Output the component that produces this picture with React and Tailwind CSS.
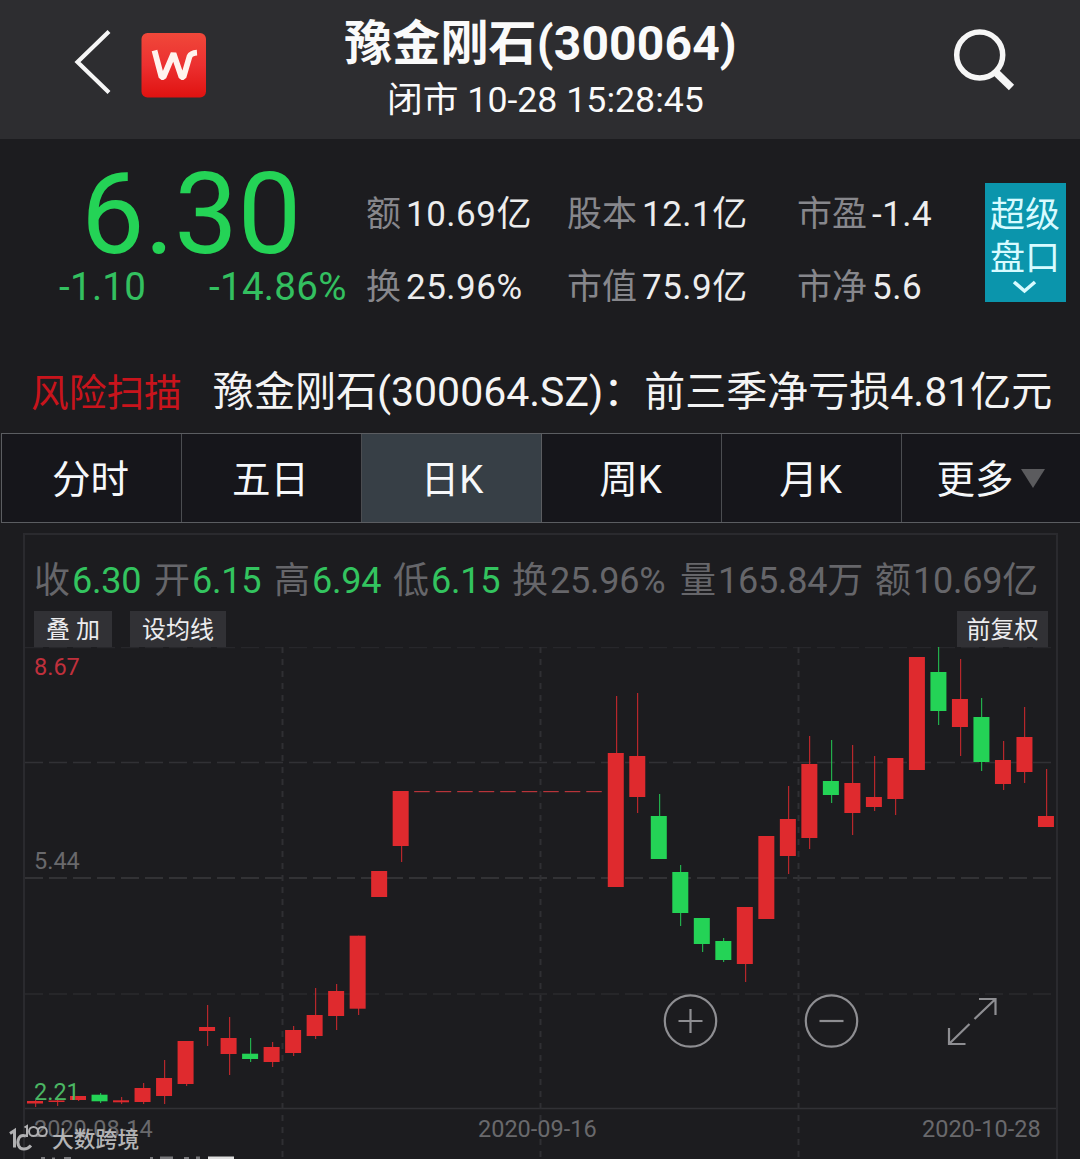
import React from "react";

const RED = "#df2a2e";
const GREEN = "#24d356";

// [index, body top, body bottom, high, low, rising]
const CANDLES = [
  [0, 1101, 1103.5, 1100, 1107, true],
  [1, 1100.5, 1102, 1099, 1106, true],
  [2, 1096, 1100, 1096, 1101, true],
  [3, 1094.7, 1101.3, 1093, 1103, false],
  [4, 1100.3, 1102.3, 1097, 1104, true],
  [5, 1088, 1102, 1083, 1104, true],
  [6, 1078, 1096, 1060, 1104, true],
  [7, 1041, 1084, 1041, 1086, true],
  [8, 1027, 1031, 1005, 1046, true],
  [9, 1038, 1054, 1017, 1075, true],
  [10, 1053.7, 1059, 1038, 1062, false],
  [11, 1047, 1062, 1042, 1067, true],
  [12, 1030, 1053, 1026, 1056, true],
  [13, 1015, 1036, 988, 1039, true],
  [14, 991, 1016, 984, 1030, true],
  [15, 935.7, 1008.7, 935.7, 1015, true],
  [16, 871, 897, 871, 897, true],
  [17, 791, 846, 791, 862, true],
  [27, 753, 887, 696, 887, true],
  [28, 756, 797, 693, 813, true],
  [29, 816, 859, 794, 859, false],
  [30, 872, 913, 865, 926, false],
  [31, 918, 944, 918, 952, false],
  [32, 941, 960, 938, 962, false],
  [33, 907, 964, 907, 982, true],
  [34, 836, 919, 836, 919, true],
  [35, 819, 856, 786, 874, true],
  [36, 764, 838, 736, 849, true],
  [37, 781, 795, 740, 803, false],
  [38, 783, 813, 745, 835, true],
  [39, 797, 807, 756, 811, true],
  [40, 758, 799, 758, 815, true],
  [41, 657, 770, 657, 770, true],
  [42, 672, 711, 646, 725, false],
  [43, 699, 727, 659, 756, true],
  [44, 717, 762, 698, 771, false],
  [45, 760, 784, 741, 790, true],
  [46, 737, 772, 707, 783, true],
  [47, 816, 827, 769, 827, true],
];

const SUSPENDED = [18, 19, 20, 21, 22, 23, 24, 25, 26];
const candleX = (i) => 35 + 21.51 * i;

function Header() {
  return (
    <header className="grid h-[139px] grid-cols-[335px_411px_334px] bg-[#2d2d30] text-[#fafafa]">
      <div className="flex items-start pl-[72px] pt-[28px]">
        <svg width="42" height="68" viewBox="72 28 42 68" fill="none" stroke="#f6f6f6" strokeWidth="4.2">
          <path d="M109 31.5 77.5 62 109 92.500" />
        </svg>
        <svg className="ml-[27px] mt-[5px]" width="66" height="66" viewBox="141 33 66 66" fill="none">
          <defs>
            <linearGradient id="brand" x1="0" y1="0" x2="0" y2="1">
              <stop offset="0" stopColor="#f0483a" />
              <stop offset="0.5" stopColor="#ec3030" />
              <stop offset="1" stopColor="#e01210" />
            </linearGradient>
          </defs>
          <rect x="141.500" y="33" width="64.500" height="64.500" rx="6" fill="url(#brand)" />
          <path
            d="M154.500 50.500 161.500 77H163.500L173.500 53.500 181.500 77H183.500L189.500 56.500Q191 53 197 52.600"
            stroke="#fff3ee"
            strokeWidth="5.800"
            strokeLinejoin="bevel"
          />
        </svg>
      </div>
      <div className="flex flex-col items-center whitespace-nowrap pt-[18px]">
        <h1 className="text-[48px] font-bold leading-[51px] tracking-[0.150px]">豫金刚石(300064)</h1>
        <p className="mt-[11px] pl-[10px] text-[35.700px] leading-[40px]">闭市 10-28 15:28:45</p>
      </div>
      <div className="flex items-start justify-end pr-[64px] pt-[26px]">
        <svg width="64" height="68" viewBox="952 26 64 68" fill="none" stroke="#f6f6f6">
          <circle cx="979.700" cy="55" r="23" strokeWidth="5.500" />
          <path d="M995.500 72 1011.500 87.500" strokeWidth="7.500" />
        </svg>
      </div>
    </header>
  );
}

function Stat({ label, value, labelClass }) {
  return (
    <div className="flex whitespace-nowrap text-[35px] leading-[40px]">
      <span className={`${labelClass} shrink-0 text-[#87878c]`}>{label}</span>
      <span className="tracking-[0.500px] text-[#ededed]">{value}</span>
    </div>
  );
}

function Quote() {
  return (
    <section className="flex h-[227px]">
      <div className="w-[366px] shrink-0 pt-[22px]">
        <div className="pl-[81px] text-[113px] leading-[108px] text-[#24d356]">6.30</div>
        <div className="flex text-[38.500px] leading-[36px] tracking-[0.300px] text-[#33c060]">
          <span className="w-[150px] pl-[59px]">-1.10</span>
          <span className="pl-[59px]">-14.86%</span>
        </div>
      </div>
      <div className="grid w-[619px] shrink-0 auto-rows-[40px] grid-cols-[201px_230px_188px] gap-y-[33px] pt-[56px]">
        <Stat label="额" value="10.69亿" labelClass="w-[40px]" />
        <Stat label="股本" value="12.1亿" labelClass="w-[75px]" />
        <Stat label="市盈" value="-1.4" labelClass="w-[75px]" />
        <Stat label="换" value="25.96%" labelClass="w-[40px]" />
        <Stat label="市值" value="75.9亿" labelClass="w-[75px]" />
        <Stat label="市净" value="5.6" labelClass="w-[75px]" />
      </div>
      <button className="mt-[44px] flex h-[119px] w-[81px] flex-col items-center bg-[#0b95ac] pr-px pt-[11px] text-[35px] leading-[43px] text-[#d8fbff]">
        <span>超级</span>
        <span>盘口</span>
        <svg width="26" height="16" viewBox="0 0 26 16" fill="none" stroke="#d8fbff" strokeWidth="3.600">
          <path d="M2 2 12.500 11 23 2" />
        </svg>
      </button>
    </section>
  );
}

function News() {
  return (
    <section className="flex h-[67px] whitespace-nowrap">
      <span className="w-[213px] shrink-0 pl-[31px] text-[37.700px] leading-[55px] text-[#c8141c]">风险扫描</span>
      <span className="text-[41px] leading-[52px] text-[#f4f4f4]">豫金刚石(300064.SZ)：前三季净亏损4.81亿元</span>
    </section>
  );
}

const TABS = ["分时", "五日", "日K", "周K", "月K", "更多"];

function Tabs() {
  return (
    <nav className="ml-px grid h-[90px] w-[1082px] grid-cols-[repeat(6,180px)] border-y border-l border-[#5b5d61] bg-[#16161b] text-[38.500px] leading-[85px] text-[#f6f8fa]">
      {TABS.map((t, i) => (
        <div
          key={t}
          className={
            i === 2
              ? "flex items-center justify-center border-r border-[#5b5d61] bg-[#373f46] pl-px pt-[3px]"
              : "flex items-center justify-center border-r border-[#4b4d51] pr-[2px] pt-[3px]"
          }
        >
          {t}
          {i === 5 && (
            <svg className="mb-[3px] ml-[7px]" width="24" height="19" viewBox="0 0 24 19">
              <path d="M0 0H24L12 19Z" fill="#5b5b5e" />
            </svg>
          )}
        </div>
      ))}
    </nav>
  );
}

const SUMMARY = [
  ["收", "6.30", "w-[120px]", true],
  ["开", "6.15", "w-[120px]", true],
  ["高", "6.94", "w-[119px]", true],
  ["低", "6.15", "w-[119px]", true],
  ["换", "25.96%", "w-[168px]", false],
  ["量", "165.84万", "w-[195px]", false],
  ["额", "10.69亿", "w-[170px]", false],
];

function Plot() {
  return (
    <svg className="block" width="1031" height="512" viewBox="25 647 1031 512">
      <g stroke="#343438" strokeWidth="1.500" fill="none">
        <path d="M25 647.500H1055" strokeDasharray="18 6" stroke="#27272b" />
        <path d="M25 762.500H1055" strokeDasharray="18 6" stroke="#313135" />
        <path d="M25 878H1055" strokeDasharray="18 6" stroke="#3a3a3e" />
        <path d="M25 994H1055" strokeDasharray="18 6" stroke="#2a2a2e" />
        <path d="M25 1108.500H1056" stroke="#313135" />
        <path d="M282.500 647V1159M540.500 647V1159M798.500 647V1159" strokeDasharray="6 6" strokeWidth="2" stroke="#2f2f33" />
      </g>
      {SUSPENDED.map((i) => (
        <rect key={i} x={candleX(i) - 8} y="791" width="15.500" height="1.200" fill="#b8343a" />
      ))}
      {CANDLES.map(([i, top, bottom, high, low, up]) => (
        <g key={i} fill={up ? RED : GREEN}>
          <rect x={Math.round(candleX(i))} y={high} width="1.200" height={low - high} opacity="0.8" />
          <rect x={candleX(i) - 8} y={top} width="16" height={bottom - top} />
        </g>
      ))}
      <g fill="#77777a">
        <rect x="41" y="1157" width="4" height="2" />
        <rect x="52" y="1157.500" width="3" height="1.500" />
        <rect x="64" y="1157" width="7" height="2" />
        <rect x="150" y="1157" width="3" height="2" />
        <rect x="160" y="1156.500" width="13" height="2.500" />
        <rect x="184" y="1157" width="5" height="2" />
        <rect x="196" y="1156.500" width="4" height="2.500" />
        <rect x="208" y="1156.500" width="26" height="2.500" fill="#dedede" />
      </g>
    </svg>
  );
}

function Controls() {
  return (
    <div className="absolute left-[637px] top-[346px] flex items-center">
      <svg width="56" height="56" viewBox="-28.500 -28 56 56" fill="none" stroke="#8e8e92" strokeWidth="2.200">
        <circle r="25.700" />
        <path d="M-12 0H12M0-12V12" />
      </svg>
      <svg className="ml-[85px]" width="56" height="56" viewBox="-28.500 -28 56 56" fill="none" stroke="#8e8e92" strokeWidth="2.200">
        <circle r="25.700" />
        <path d="M-12 0H12" />
      </svg>
      <svg className="ml-[85px]" width="56" height="56" viewBox="945 993 56 56" fill="none" stroke="#8e8e92" strokeWidth="2.200">
        <path d="M950 1044 970.500 1024M975.500 1019 996.500 999M980 999H996.500V1015M950 1028V1044H966.500" />
      </svg>
    </div>
  );
}

function Watermark() {
  return (
    <div className="absolute -left-[17px] top-[475px] flex items-center text-[#b4b4b6]">
      <svg width="42" height="30" viewBox="8 1123 42 30" fill="none" stroke="#b0b0b2">
        <path d="M10 1133.500 14.500 1130.500V1147.500" strokeWidth="3" />
        <path d="M26 1136C18.500 1133.500 17 1141 18.500 1145.500 20.500 1150.500 27 1150 31 1145.500" strokeWidth="3" />
        <path d="M24.500 1127.500 27 1126V1137" strokeWidth="2" />
        <circle cx="33.500" cy="1131.500" r="4.500" strokeWidth="2" />
        <circle cx="42.300" cy="1131.500" r="4.500" strokeWidth="2" />
      </svg>
      <span className="ml-[2px] pt-[4px] text-[21.800px] font-medium leading-[28px]">大数跨境</span>
    </div>
  );
}

function Chart() {
  return (
    <section className="ml-[23px] mt-[10px] h-[626px] w-[1035px] border-x-2 border-t-2 border-[#2a2a2e]">
      <div className="flex whitespace-nowrap pl-[9px] pt-[27px] text-[36px] leading-[39px]">
        {SUMMARY.map(([label, value, width, up]) => (
          <div key={label} className={`${width} flex shrink-0 text-[#66666a]`}>
            <span className="w-[38px] shrink-0">{label}</span>
            <span className={up ? "tracking-[-0.200px] text-[#33c45f]" : "tracking-[-0.250px]"}>{value}</span>
          </div>
        ))}
      </div>
      <div className="mt-[10px] flex h-[36px] pl-[9px] pr-[8px] text-[24px] leading-[39px] text-[#ececee]">
        <span className="w-[78px] bg-[#313135] text-center">叠 加</span>
        <span className="ml-[18px] w-[96px] bg-[#313135] text-center">设均线</span>
        <span className="ml-auto w-[91px] bg-[#313135] text-center">前复权</span>
      </div>
      <div className="relative text-[23.500px] leading-[24px] text-[#69696c]">
        <Plot />
        <span className="absolute left-[9px] top-[8px] text-[#c0303c]">8.67</span>
        <span className="absolute left-[9px] top-[202px]">5.44</span>
        <span className="absolute left-[9px] top-[433px] text-[#4bb663]">2.21</span>
        <span className="absolute left-[9px] top-[470px]">2020-08-14</span>
        <span className="absolute left-[453px] top-[470px]">2020-09-16</span>
        <span className="absolute left-[897px] top-[470px]">2020-10-28</span>
        <Controls />
        <Watermark />
      </div>
    </section>
  );
}

export default function App() {
  return (
    <main className="h-[1159px] w-[1080px] overflow-hidden bg-[#1c1c1f] font-[Roboto,'Noto_Sans_CJK_SC',sans-serif]">
      <Header />
      <Quote />
      <News />
      <Tabs />
      <Chart />
    </main>
  );
}
